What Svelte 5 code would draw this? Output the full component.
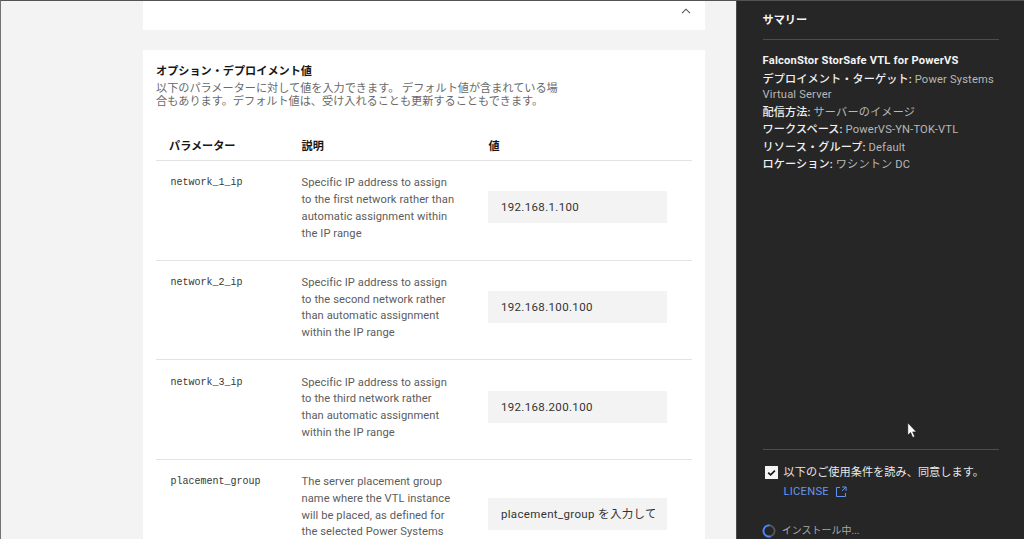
<script lang="ts">
	type Parameter = { name: string; description: string[]; value: string };

	const parameters: Parameter[] = [
		{
			name: 'network_1_ip',
			description: [
				'Specific IP address to assign',
				'to the first network rather than',
				'automatic assignment within',
				'the IP range'
			],
			value: '192.168.1.100'
		},
		{
			name: 'network_2_ip',
			description: [
				'Specific IP address to assign',
				'to the second network rather',
				'than automatic assignment',
				'within the IP range'
			],
			value: '192.168.100.100'
		},
		{
			name: 'network_3_ip',
			description: [
				'Specific IP address to assign',
				'to the third network rather',
				'than automatic assignment',
				'within the IP range'
			],
			value: '192.168.200.100'
		},
		{
			name: 'placement_group',
			description: [
				'The server placement group',
				'name where the VTL instance',
				'will be placed, as defined for',
				'the selected Power Systems',
				'Virtual Server',
				'workspace'
			],
			value: 'placement_group を入力してください'
		}
	];

	const details = [
		{ label: 'デプロイメント・ターゲット:', value: 'Power Systems Virtual Server' },
		{ label: '配信方法:', value: 'サーバーのイメージ' },
		{ label: 'ワークスペース:', value: 'PowerVS-YN-TOK-VTL' },
		{ label: 'リソース・グループ:', value: 'Default' },
		{ label: 'ロケーション:', value: 'ワシントン DC' }
	];

	let accepted = $state(true);
</script>

<div class="page">
	<main class="content">
		<section class="accordion">
			<svg class="chevron" viewBox="0 0 10 6" aria-hidden="true">
				<path d="M1 5.2 5 1.2 9 5.2" />
			</svg>
		</section>

		<section class="panel">
			<h2>オプション・デプロイメント値</h2>
			<p class="intro">
				以下のパラメーターに対して値を入力できます。 デフォルト値が含まれている場<br
				/>合もあります。デフォルト値は、受け入れることも更新することもできます。
			</p>

			<div class="row head">
				<span>パラメーター</span>
				<span>説明</span>
				<span>値</span>
			</div>
			{#each parameters as p}
				<div class="row">
					<code>{p.name}</code>
					<div class="desc">
						{#each p.description as line}
							<div>{line}</div>
						{/each}
					</div>
					<div class="field"><span>{p.value}</span></div>
				</div>
			{/each}
		</section>
	</main>

	<aside class="summary">
		<h3>サマリー</h3>
		<div class="details">
			<h4>FalconStor StorSafe VTL for PowerVS</h4>
			{#each details as d}
				<p><strong>{d.label}</strong> {d.value}</p>
			{/each}
		</div>

		<div class="terms">
			<button
				class="check"
				role="checkbox"
				aria-checked={accepted}
				aria-label="以下のご使用条件を読み、同意します。"
				onclick={() => (accepted = !accepted)}
			>
				{#if accepted}
					<svg viewBox="0 0 13 13"><path d="M3.2 6.6 5.6 8.9 9.9 4.6" /></svg>
				{/if}
			</button>
			<div>
				<div class="agree">以下のご使用条件を読み、同意します。</div>
				<a href="#license">
					LICENSE
					<svg class="launch" viewBox="0 0 12 12" aria-hidden="true">
						<path d="M5 1.5H1.5v9h9V7M7.2 1h3.9v3.9M11 1 7 5" />
					</svg>
				</a>
			</div>
		</div>

		<div class="status">
			<svg class="spinner" viewBox="0 0 14 14" aria-hidden="true">
				<circle cx="7" cy="7" r="5.6" />
				<path d="M7.6 1.4A5.6 5.6 0 1 0 8.4 12.4" />
			</svg>
			<span>インストール中...</span>
		</div>
	</aside>

	<svg class="cursor" viewBox="0 0 10 17" aria-hidden="true">
		<path d="M.8.8V13.2L3.6 10.6 5.7 15.5 7.8 14.6 5.7 9.9H9.4Z" />
	</svg>
</div>

<style>
	:global(body) {
		overflow: hidden;
	}
	.page {
		position: relative;
		box-sizing: border-box;
		display: grid;
		grid-template-columns: 735px 1fr;
		width: 1024px;
		height: 539px;
		overflow: hidden;
		border-top: 1px solid #555254;
		border-left: 1px solid #737173;
		background: #f3f3f3;
		font-family: Roboto, 'Noto Sans CJK JP', sans-serif;
		font-size: 11.15px;
		color: #161616;
	}
	h2,
	h3,
	h4,
	p {
		margin: 0;
	}

	.content {
		width: 562px;
		margin-left: 142px;
		height: 538px;
		overflow: hidden;
	}
	.accordion {
		display: flex;
		justify-content: flex-end;
		box-sizing: border-box;
		height: 29px;
		padding: 7px 14px 0 0;
		background: #fff;
	}
	.chevron {
		width: 10px;
		height: 6px;
	}
	.chevron path {
		fill: none;
		stroke: #525252;
		stroke-width: 1.1;
	}
	.panel {
		margin-top: 19.5px;
		padding: 14px 13px 0;
		background: #fff;
	}
	h2 {
		font-size: 11.15px;
		font-weight: 700;
		line-height: 16px;
	}
	.intro {
		margin-top: 2.4px;
		line-height: 13px;
		color: #6a6a6a;
		white-space: nowrap;
	}

	.row {
		display: grid;
		grid-template-columns: 132.5px 187px 1fr;
		box-sizing: border-box;
		min-height: 99.67px;
		padding: 14.5px 0 0 13px;
		border-bottom: 1px solid #e3e3e3;
	}
	.head {
		min-height: 0;
		height: 53.1px;
		padding-top: 31.4px;
		font-weight: 700;
		line-height: 16px;
	}
	code {
		padding-left: 1.5px;
		font-family: 'Liberation Mono', monospace;
		font-size: 10px;
		line-height: 16.67px;
		color: #363636;
	}
	.desc {
		line-height: 16.67px;
		letter-spacing: 0.08px;
		color: #5c5c5c;
		white-space: nowrap;
	}
	.field {
		align-self: center;
		box-sizing: border-box;
		width: 179px;
		height: 32px;
		margin-top: -20.6px;
		margin-left: -0.4px;
		padding: 1px 12px 0 12.8px;
		background: #f3f3f3;
		font-size: 11.5px;
		line-height: 31px;
		letter-spacing: 0.35px;
		color: #333;
	}
	.field span {
		display: block;
		overflow: hidden;
		white-space: nowrap;
	}

	.summary {
		display: flex;
		flex-direction: column;
		box-sizing: border-box;
		height: 538px;
		padding: 12px 25px 0 25.6px;
		border-left: 1px solid #4c4c4c;
		background: #262626;
		color: #b8b8b8;
	}
	h3 {
		padding-bottom: 10px;
		border-bottom: 1px solid #4d4d4d;
		font-size: 11.15px;
		line-height: 16px;
		color: #f4f4f4;
	}
	.details {
		height: 409px;
		padding-top: 13px;
		box-sizing: border-box;
	}
	h4 {
		margin-bottom: 5.4px;
		font-size: 11.15px;
		line-height: 15px;
		letter-spacing: 0.2px;
		color: #f4f4f4;
		white-space: nowrap;
	}
	.details p {
		margin-bottom: 2.7px;
		line-height: 14.8px;
		letter-spacing: 0.18px;
	}
	.details strong {
		font-weight: 500;
		letter-spacing: 0.1px;
		color: #f0f0f0;
	}

	.terms {
		display: flex;
		gap: 6px;
		padding: 14.5px 0 0 2px;
		border-top: 1px solid #4d4d4d;
		white-space: nowrap;
	}
	.check {
		width: 13px;
		height: 13px;
		margin-top: 1px;
		padding: 0;
		border: 0;
		background: #f4f4f4;
	}
	.check svg {
		display: block;
	}
	.check path {
		fill: none;
		stroke: #161616;
		stroke-width: 1.6;
	}
	.agree {
		line-height: 16px;
		letter-spacing: 0.05px;
		color: #e8e8e8;
	}
	.terms a {
		display: flex;
		align-items: center;
		gap: 6.5px;
		margin-top: 3.5px;
		line-height: 16px;
		letter-spacing: 0.25px;
		color: #6795ee;
		text-decoration: none;
	}
	.launch {
		width: 12px;
		height: 12px;
	}
	.launch path {
		fill: none;
		stroke: #6795ee;
		stroke-width: 1;
	}
	.status {
		display: flex;
		align-items: center;
		gap: 6px;
		margin: 23.5px 0 0 -0.8px;
		font-size: 10px;
		line-height: 14px;
		color: #a8a8a8;
	}
	.spinner {
		width: 14px;
		height: 14px;
		flex-shrink: 0;
	}
	.spinner circle,
	.spinner path {
		fill: none;
		stroke: #5a5a5a;
		stroke-width: 1.7;
	}
	.spinner path {
		stroke: #4589ff;
	}

	.cursor {
		position: absolute;
		left: 906px;
		top: 421px;
		width: 10px;
		height: 17px;
	}
	.cursor path {
		fill: #fff;
		stroke: #111;
		stroke-width: 0.6;
	}
</style>
